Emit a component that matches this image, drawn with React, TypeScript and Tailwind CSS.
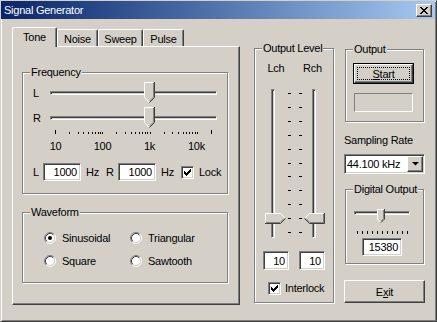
import React from "react";

const raised =
  "border border-t-white border-l-white border-r-[#404040] border-b-[#404040] shadow-[inset_-1px_-1px_0_#808080]";
const sunken =
  "border border-t-[#808080] border-l-[#808080] border-r-white border-b-white shadow-[inset_1px_1px_0_#404040,inset_-1px_-1px_0_#d4d0c8]";
const etched = "border border-[#808080] shadow-[inset_1px_1px_0_#fff,1px_1px_0_#fff]";

function Group({ label, className, children }: { label: string; className: string; children?: React.ReactNode }) {
  return (
    <div className={`relative ${etched} ${className}`}>
      <span className="absolute -top-[8px] left-[7px] bg-[#d4d0c8] px-[1px] leading-[14px] whitespace-nowrap">{label}</span>
      {children}
    </div>
  );
}

function Edit({ value, className }: { value: string; className: string }) {
  return (
    <div className={`${sunken} bg-white flex items-center justify-end pr-[3px] ${className}`}>{value}</div>
  );
}

function Check() {
  const tops = [2, 3, 4, 3, 2, 1, 0];
  return (
    <span className={`${sunken} bg-white w-[13px] h-[13px] shrink-0 relative block`}>
      <svg width="7" height="7" className="absolute left-[2px] top-[2px]">
        {tops.map((t, i) => (
          <rect key={i} x={i} y={t} width="1" height="3" fill="#000" />
        ))}
      </svg>
    </span>
  );
}

function Radio({ on }: { on?: boolean }) {
  return (
    <svg width="12" height="12" className="shrink-0">
      <circle cx="6" cy="6" r="4.5" fill="#fff" />
      <path d="M2.11 9.89 A5.5 5.5 0 0 1 9.89 2.11" stroke="#808080" fill="none" />
      <path d="M9.89 2.11 A5.5 5.5 0 0 1 2.11 9.89" stroke="#fff" fill="none" />
      <path d="M2.82 9.18 A4.5 4.5 0 0 1 9.18 2.82" stroke="#404040" fill="none" />
      <path d="M9.18 2.82 A4.5 4.5 0 0 1 2.82 9.18" stroke="#d4d0c8" fill="none" />
      {on && <circle cx="6" cy="6" r="2" fill="#000" />}
    </svg>
  );
}

function ThumbDown({ className }: { className: string }) {
  return (
    <svg width="11" height="21" className={`absolute ${className}`}>
      <path d="M0 0H11V15.5L5.5 21L0 15.5Z" fill="#d4d0c8" />
      <path d="M0.5 15.5V0.5H10" stroke="#fff" fill="none" />
      <path d="M0.5 15.5L5 20" stroke="#fff" fill="none" />
      <path d="M10.5 0V15.5L5.5 20.5" stroke="#404040" fill="none" />
      <path d="M9.5 1V15.1L5.5 19.1" stroke="#808080" fill="none" />
    </svg>
  );
}

function SmallThumb({ className }: { className: string }) {
  return (
    <svg width="8" height="14" className={`absolute ${className}`}>
      <path d="M0 0H8V10L4 14L0 10Z" fill="#d4d0c8" />
      <path d="M0.5 10V0.5H7" stroke="#fff" fill="none" />
      <path d="M0.5 10L3.5 13" stroke="#fff" fill="none" />
      <path d="M7.5 0V10L4 13.5" stroke="#404040" fill="none" />
      <path d="M6.5 1V9.6L4 12.2" stroke="#808080" fill="none" />
    </svg>
  );
}

function ThumbRight({ className }: { className: string }) {
  return (
    <svg width="21" height="11" className={`absolute ${className}`}>
      <path d="M0 0H15.5L21 5.5L15.5 11H0Z" fill="#d4d0c8" />
      <path d="M0.5 10.5V0.5H15.5L20 5" stroke="#fff" fill="none" />
      <path d="M0 10.5H15.5L20.5 5.5" stroke="#404040" fill="none" />
      <path d="M1 9.5H15.1L19.1 5.5" stroke="#808080" fill="none" />
    </svg>
  );
}

function ThumbLeft({ className }: { className: string }) {
  return (
    <svg width="21" height="11" className={`absolute ${className}`}>
      <path d="M21 0H5.5L0 5.5L5.5 11H21Z" fill="#d4d0c8" />
      <path d="M20 0.5H5.5L1 5" stroke="#fff" fill="none" />
      <path d="M20.5 0V10.5H5.5L0.5 5.5" stroke="#404040" fill="none" />
      <path d="M19.5 1V9.5H5.9L1.9 5.5" stroke="#808080" fill="none" />
    </svg>
  );
}

function FreqSlider({ label }: { label: string }) {
  return (
    <div className="flex items-center h-[22px]">
      <span className="w-[17px]">{label}</span>
      <div className="relative w-[167px] h-[22px]">
        <div className={`absolute left-0 right-0 top-[9px] h-[4px] ${sunken}`} />
        <ThumbDown className="left-[94px] top-0" />
      </div>
    </div>
  );
}

// log scale 10 Hz .. 20 kHz, only the two ends get a long tick
function FreqTicks() {
  const ticks: { x: number; tall: boolean }[] = [{ x: 5, tall: true }];
  for (const d of [10, 100, 1000, 10000]) {
    for (let k = d === 10 ? 2 : 1; k <= 9; k++) {
      const f = d * k;
      if (f >= 20000) break;
      ticks.push({ x: Math.round(5 + (Math.log10(f) - 1) * 47.26), tall: false });
    }
  }
  ticks.push({ x: 161, tall: true });
  return (
    <svg width="167" height="4" className="block">
      {ticks.map((t, i) => (
        <rect key={i} x={t.x} y={t.tall ? 0 : 2} width="1" height={t.tall ? 4 : 2} fill="#000" />
      ))}
    </svg>
  );
}

function TabControl() {
  const tab =
    "h-[17px] border-t border-l border-r border-t-white border-l-white border-r-[#404040] shadow-[inset_-1px_0_0_#808080] rounded-t-[2px] flex justify-center pt-[2px]";
  return (
    <div className="ml-[11px] mt-[8px] w-[228px] flex flex-col">
      <div className="flex items-end h-[19px]">
        <div className="relative z-10 -mb-px h-[20px] w-[45px] bg-[#d4d0c8] border-t border-l border-r border-t-white border-l-white border-r-[#404040] shadow-[inset_-1px_0_0_#808080] rounded-t-[2px] flex justify-center pt-[2px]">
          Tone
        </div>
        <div className={`${tab} w-[41px]`}>Noise</div>
        <div className={`${tab} w-[45px]`}>Sweep</div>
        <div className={`${tab} w-[41px]`}>Pulse</div>
      </div>
      <div className={`h-[259px] ${raised} pl-[9px] pt-[25px]`}>
        <Group label="Frequency" className="w-[206px] h-[122px]">
          <div className="ml-[10px] mt-[9px]">
            <FreqSlider label="L" />
            <div className="mt-[3px]">
              <FreqSlider label="R" />
            </div>
            <div className="ml-[17px] mt-[1px]">
              <FreqTicks />
            </div>
            <div className="flex -ml-px mt-[5px]">
              {["10", "100", "1k", "10k"].map((s) => (
                <span key={s} className="w-[47px] text-center">
                  {s}
                </span>
              ))}
            </div>
            <div className="flex items-center mt-[10px] h-[18px]">
              <span className="w-[10px]">L</span>
              <Edit value="1000" className="w-[38px] h-[18px]" />
              <span className="ml-[5px] w-[20px]">Hz</span>
              <span className="w-[12px]">R</span>
              <Edit value="1000" className="w-[38px] h-[18px]" />
              <span className="ml-[5px] w-[20px]">Hz</span>
              <Check />
              <span className="ml-[5px]">Lock</span>
            </div>
          </div>
        </Group>
        <Group label="Waveform" className="mt-[18px] w-[206px] h-[71px]">
          <div className="ml-[21px] mt-[17px] flex items-center h-[16px]">
            <div className="w-[86px] flex items-center gap-[6px]">
              <Radio on />
              <span>Sinusoidal</span>
            </div>
            <div className="flex items-center gap-[6px]">
              <Radio />
              <span>Triangular</span>
            </div>
          </div>
          <div className="ml-[21px] mt-[7px] flex items-center h-[16px]">
            <div className="w-[86px] flex items-center gap-[6px]">
              <Radio />
              <span>Square</span>
            </div>
            <div className="flex items-center gap-[6px]">
              <Radio />
              <span>Sawtooth</span>
            </div>
          </div>
        </Group>
      </div>
    </div>
  );
}

function OutputLevel() {
  const dashes = Array.from({ length: 11 }, (_, i) => Math.round(4 + i * 13.9));
  return (
    <Group label="Output Level" className="ml-[14px] mt-[29px] w-[80px] h-[255px]">
      <div className="flex mt-[12px] ml-[3px]">
        <span className="w-[36px] text-center">Lch</span>
        <span className="w-[37px] text-center">Rch</span>
      </div>
      <div className="relative mt-[14px] h-[149px]">
        <div className={`absolute left-[16px] top-0 bottom-0 w-[4px] ${sunken}`} />
        <div className={`absolute left-[57px] top-0 bottom-0 w-[4px] ${sunken}`} />
        <svg width="78" height="149" className="absolute left-0 top-0">
          {dashes.map((y) => (
            <g key={y}>
              <rect x="33" y={y} width="3" height="1" fill="#000" />
              <rect x="44" y={y} width="3" height="1" fill="#000" />
            </g>
          ))}
        </svg>
        <ThumbRight className="left-[10px] top-[124px]" />
        <ThumbLeft className="left-[49px] top-[124px]" />
      </div>
      <div className="flex mt-[13px]">
        <Edit value="10" className="ml-[8px] w-[26px] h-[19px]" />
        <Edit value="10" className="ml-[10px] w-[26px] h-[19px]" />
      </div>
      <div className="flex items-center mt-[11px] ml-[13px]">
        <Check />
        <span className="ml-[4px]">Interlock</span>
      </div>
    </Group>
  );
}

function RightColumn() {
  return (
    <div className="ml-[10px] mt-[30px] w-[81px] flex flex-col">
      <Group label="Output" className="ml-[1px] w-[79px] h-[73px]">
        <div className="ml-[7px] mt-[13px] w-[61px] h-[21px] border border-black">
          <div className={`w-full h-full ${raised} p-[2px]`}>
            <div className="w-full h-full border border-dotted border-black flex items-center justify-center">
              <span>
                <u>S</u>tart
              </span>
            </div>
          </div>
        </div>
        <div className="ml-[8px] mt-[9px] w-[59px] h-[19px] border border-t-[#808080] border-l-[#808080] border-r-white border-b-white" />
      </Group>
      <div className="mt-[11px] whitespace-nowrap">Sampling Rate</div>
      <div className={`mt-[7px] h-[20px] w-[81px] ${sunken} bg-white flex items-center pl-[2px] pr-[1px]`}>
        <span className="flex-1">44.100 kHz</span>
        <div className={`w-[16px] h-[16px] ${raised} bg-[#d4d0c8] flex items-center justify-center`}>
          <svg width="7" height="4">
            <path d="M0 0H7L3.5 3.5Z" fill="#000" />
          </svg>
        </div>
      </div>
      <Group label="Digital Output" className="mt-[15px] ml-[1px] w-[79px] h-[75px]">
        <div className="relative ml-[8px] mt-[19px] w-[56px] h-[14px]">
          <div className={`absolute left-0 right-0 top-[2px] h-[4px] ${sunken}`} />
          <SmallThumb className="left-[23px] top-0" />
        </div>
        <svg width="56" height="3" className="block ml-[8px] mt-[8px]">
          {Array.from({ length: 11 }, (_, i) => (
            <rect key={i} x={3 + i * 5} y="0" width="1" height="3" fill="#000" />
          ))}
        </svg>
        <Edit value="15380" className="ml-[16px] mt-[4px] w-[40px] h-[18px]" />
      </Group>
      <div className={`mt-[16px] h-[23px] w-[81px] ${raised} flex items-center justify-center`}>
        <span>
          E<u>x</u>it
        </span>
      </div>
    </div>
  );
}

function CloseButton() {
  return (
    <div className={`w-[16px] h-[13px] bg-[#d4d0c8] ${raised} flex items-center justify-center`}>
      <svg width="8" height="7">
        {Array.from({ length: 7 }, (_, i) => (
          <g key={i}>
            <rect x={i} y={i} width="2" height="1" fill="#000" />
            <rect x={6 - i} y={i} width="2" height="1" fill="#000" />
          </g>
        ))}
      </svg>
    </div>
  );
}

export default function App() {
  return (
    <div className="w-[437px] h-[322px] bg-[#d4d0c8] border border-t-[#d4d0c8] border-l-[#d4d0c8] border-r-[#404040] border-b-[#404040] shadow-[inset_1px_1px_0_#fff,inset_-1px_-1px_0_#808080] flex flex-col font-['Liberation_Sans',Arial,sans-serif] text-[11px] leading-[14px] tracking-[-0.25px] text-black overflow-hidden">
      <div className="h-[18px] mr-[1px] flex items-center bg-linear-to-r from-[#0a246a] to-[#a6caf0] pl-[3px] pr-[3px]">
        <span className="text-white flex-1">Signal Generator</span>
        <CloseButton />
      </div>
      <div className="flex items-start">
        <TabControl />
        <OutputLevel />
        <RightColumn />
      </div>
    </div>
  );
}
